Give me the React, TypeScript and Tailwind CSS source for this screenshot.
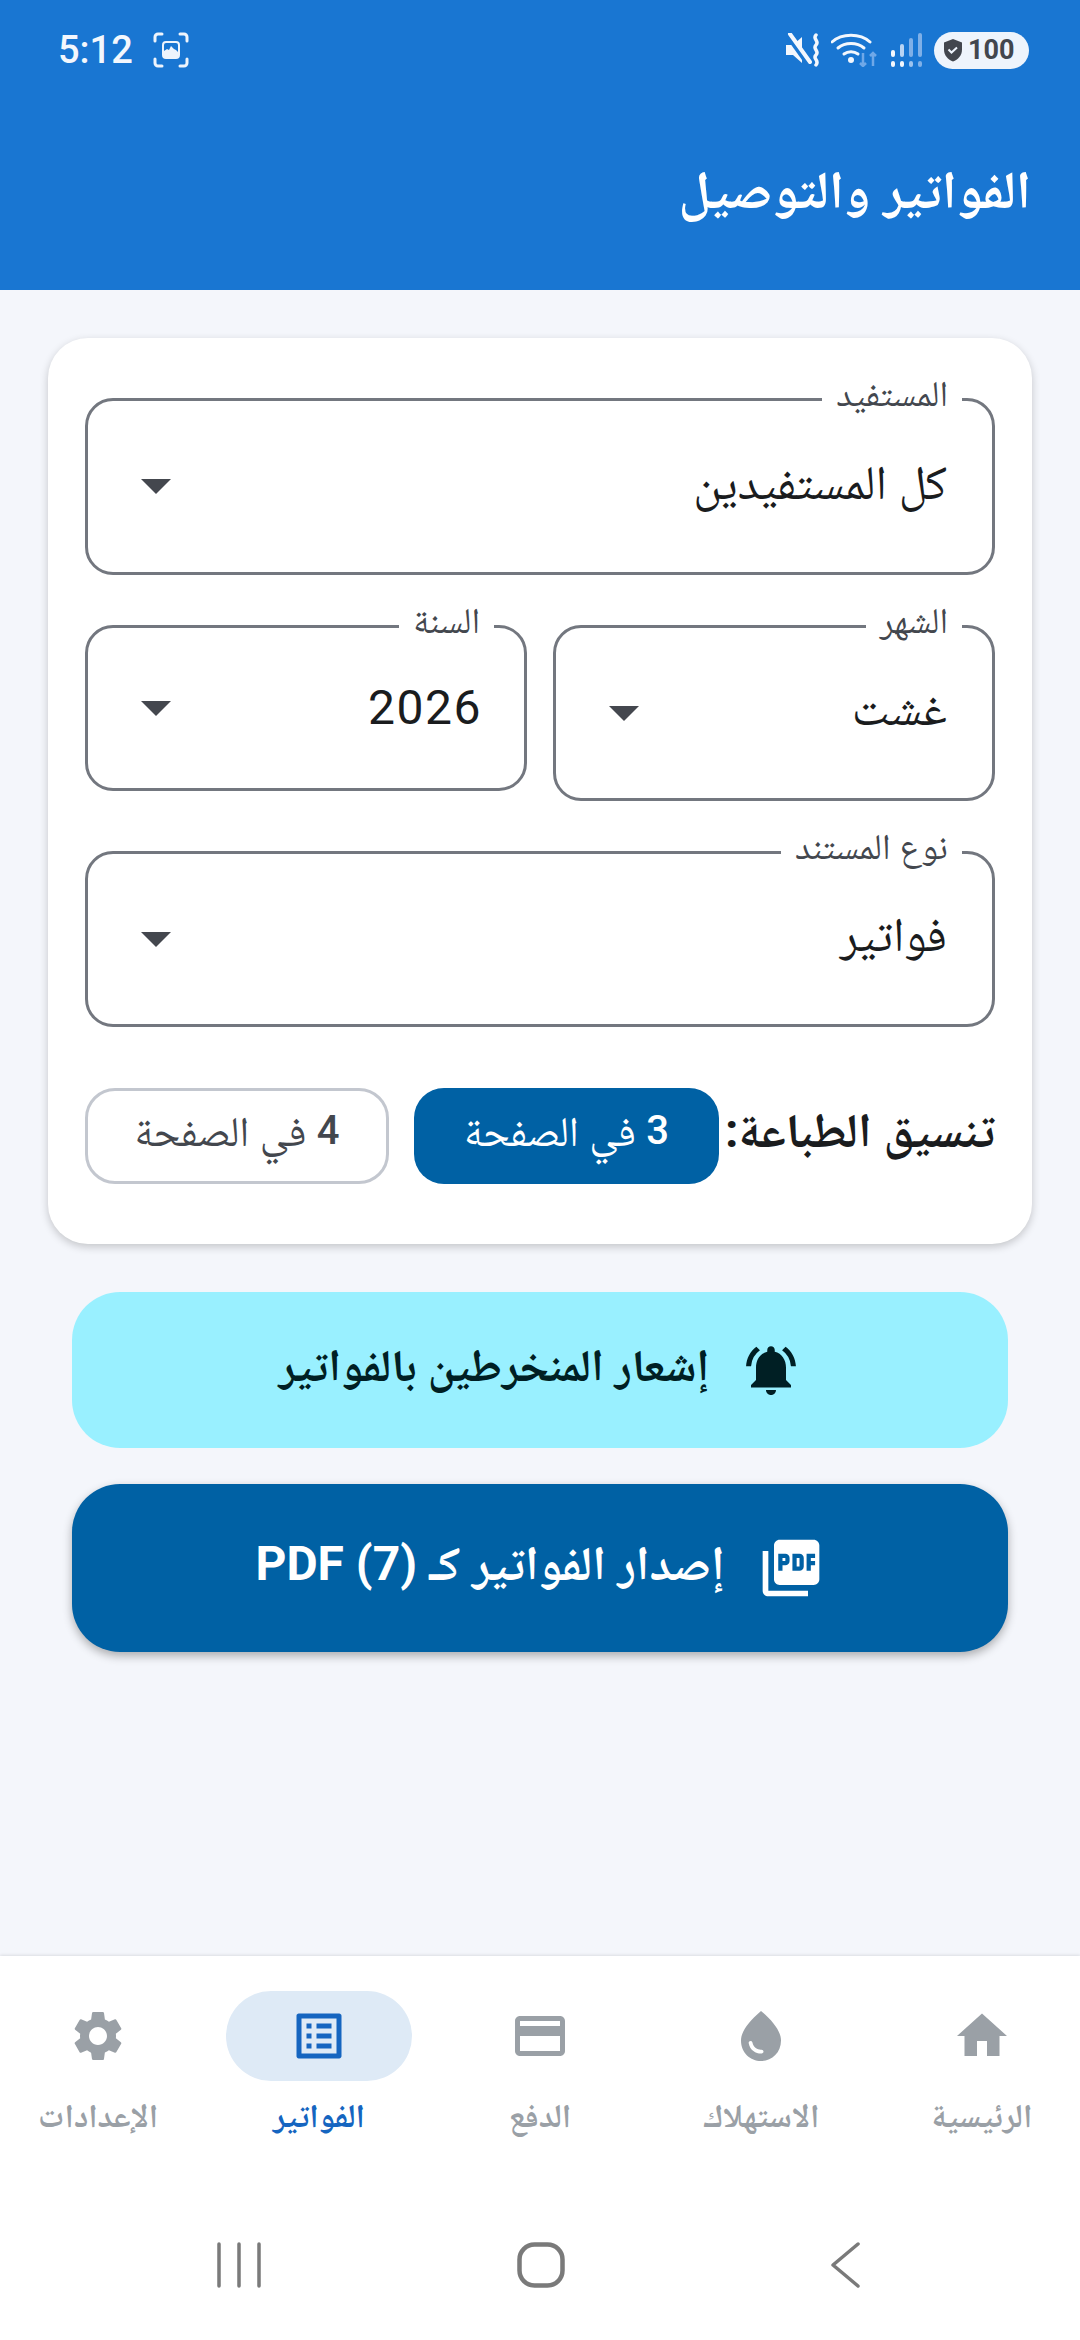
import { MdHome, MdWaterDrop, MdCreditCard, MdListAlt, MdSettings, MdNotificationsActive, MdPictureAsPdf } from "react-icons/md";

const font = { fontFamily: 'Roboto,"Noto Naskh Arabic","DejaVu Sans",sans-serif' };

function Field({ label, value, heightClass, widthClass, valueClass }: { label: string; value: string; heightClass: string; widthClass: string; valueClass: string }) {
  return (
    <div className={`relative ${widthClass} ${heightClass} border-[3px] border-[#73777f] rounded-[28px] pr-[45px] pl-[53px] flex items-center justify-between`}>
      <span className="absolute -top-[27px] right-[30px] bg-white px-[14px] text-[36px] leading-[40px] text-[#43474e]">{label}</span>
      <span className={`${valueClass} text-[48px] leading-[64px] text-[#1a1c1e]`}>{value}</span>
      <svg width="30" height="15" viewBox="0 0 30 15"><path d="M0 0h30L15 15z" fill="#44474e" /></svg>
    </div>
  );
}

const tabs = [
  { label: "الرئيسية", Icon: MdHome },
  { label: "الاستهلاك", Icon: MdWaterDrop },
  { label: "الدفع", Icon: MdCreditCard },
  { label: "الفواتير", Icon: MdListAlt, active: true },
  { label: "الإعدادات", Icon: MdSettings },
];

export default function App() {
  return (
    <div dir="rtl" style={font} className="w-[1080px] h-[2340px] flex flex-col bg-[#f4f6fb] overflow-hidden">
      <header className="h-[290px] bg-[#1976d2] flex flex-col shrink-0">
        <div dir="ltr" className="h-[100px] flex items-center justify-between pl-[58px] pr-[51px]">
          <div className="flex items-center gap-[20px]">
            <span className="text-[38px] leading-[44px] font-medium text-[#f3f7fd]">5:12</span>
            <svg width="36" height="36" viewBox="0 0 36 36" fill="none" stroke="#eef4fc" strokeWidth="3" strokeLinecap="round">
              <path d="M2 9V5a3 3 0 0 1 3-3h4M27 2h4a3 3 0 0 1 3 3v4M34 27v4a3 3 0 0 1-3 3h-4M9 34H5a3 3 0 0 1-3-3v-4" />
              <rect x="10" y="10" width="16" height="16" rx="3" stroke="#eef4fc" strokeWidth="2" fill="#1976d2" />
              <path d="M11 25v-6l3-2 2 1 2-4 3 3 2 1 2 2v5z" fill="#eef4fc" stroke="none" />
            </svg>
          </div>
          <div className="flex items-center gap-[10px]">
            <svg width="36" height="34" viewBox="0 0 36 34" fill="#f3f7fd">
              <path d="M1 12h7l9-8v26l-9-8H1z" />
              <path d="M3 3l20 28" stroke="#1976d2" strokeWidth="5" />
              <path d="M5 1l20 28" stroke="#f3f7fd" strokeWidth="4" strokeLinecap="round" />
              <path d="M31 2c-4 4 4 6 0 10s4 6 0 10 4 5 0 10" fill="none" stroke="#f3f7fd" strokeWidth="3.5" strokeLinecap="round" />
            </svg>
            <svg width="48" height="34" viewBox="0 0 48 34" fill="none">
              <path d="M1 9c10-9 28-9 38 0" stroke="#f3f7fd" strokeWidth="3" strokeLinecap="round" />
              <path d="M7 15c7-6 19-6 26 0" stroke="#f3f7fd" strokeWidth="3" strokeLinecap="round" />
              <path d="M13 21c4-3 10-3 14 0" stroke="#f3f7fd" strokeWidth="3" strokeLinecap="round" />
              <circle cx="20" cy="27" r="3" fill="#f3f7fd" />
              <path d="M32 20v13m-3-3l3 3 3-3M42 33V20m-3 3l3-3 3 3" stroke="#6fa8e8" strokeWidth="2.5" />
            </svg>
            <svg width="31" height="34" viewBox="0 0 31 34" fill="#f3f7fd" className="ml-[2px]">
              <rect x="0" y="28" width="4" height="6" rx="2" />
              <rect x="0" y="17" width="4" height="7" rx="2" />
              <rect x="9" y="28" width="4" height="6" rx="2" />
              <rect x="9" y="11" width="4" height="13" rx="2" fill="#b8d4f4" />
              <rect x="18" y="28" width="4" height="6" rx="2" fill="#9cc3ef" />
              <rect x="18" y="5" width="4" height="19" rx="2" fill="#7fb0e8" />
              <rect x="27" y="28" width="4" height="6" rx="2" fill="#7fb0e8" />
              <rect x="27" y="0" width="4" height="24" rx="2" fill="#7fb0e8" />
            </svg>
            <div className="ml-[2px] w-[95px] h-[37px] rounded-full bg-[#eef4fc] flex items-center pl-[9px] gap-[5px]">
              <svg width="20" height="24" viewBox="0 0 20 24">
                <path d="M10 1l9 3.5v7c0 6-4 10-9 12-5-2-9-6-9-12v-7z" fill="#42464e" />
                <path d="M5.5 11.5l3 3 5.5-5" fill="none" stroke="#eef4fc" strokeWidth="2" />
              </svg>
              <span className="text-[27px] leading-[30px] font-bold text-[#42464e]">100</span>
            </div>
          </div>
        </div>
        <div className="flex-1 flex items-start pr-[49px] pt-[50px]">
          <h1 className="text-[53px] leading-[80px] font-bold text-white">الفواتير والتوصيل</h1>
        </div>
      </header>

      <main className="flex-1 px-[48px] pt-[48px]">
        <section className="bg-white rounded-[40px] shadow-[0_3px_8px_rgba(0,0,0,0.2)] h-[906px] px-[37px] pt-[60px] flex flex-col">
          <Field label="المستفيد" value="كل المستفيدين" widthClass="w-full" heightClass="h-[177px]" valueClass="pb-[8px]" />
          <div className="flex items-start gap-[26px] mt-[50px]">
            <Field label="الشهر" value="غشت" widthClass="flex-1" heightClass="h-[176px]" valueClass="pb-[8px]" />
            <Field label="السنة" value="2026" widthClass="flex-1" heightClass="h-[166px]" valueClass="tracking-[1.5px] -mr-[3px]" />
          </div>
          <div className="mt-[50px]">
            <Field label="نوع المستند" value="فواتير" widthClass="w-full" heightClass="h-[176px]" valueClass="pb-[8px]" />
          </div>
          <div className="flex items-center mt-[61px]">
            <span className="flex-1 pb-[11px] text-[48px] font-bold text-[#1a1c1e] whitespace-nowrap">تنسيق الطباعة:</span>
            <div className="shrink-0 w-[305px] h-[96px] pb-[10px] rounded-[30px] bg-[#0061a4] text-white flex items-center justify-center text-[42px]">
              <b className="font-medium text-[40px]">3</b>&nbsp;في الصفحة
            </div>
            <div className="shrink-0 w-[304px] h-[96px] mr-[25px] pb-[10px] rounded-[30px] border-[3px] border-[#c3c7cf] text-[#43474e] flex items-center justify-center text-[42px]">
              <b className="font-medium text-[40px]">4</b>&nbsp;في الصفحة
            </div>
          </div>
        </section>

        <div className="px-[24px] mt-[48px] flex flex-col gap-[36px]">
          <button className="h-[156px] rounded-[48px] bg-[#99f0ff] text-[#001f24] flex items-center justify-center gap-[32px] text-[45px] font-bold">
            <MdNotificationsActive size={60} />
            <span className="pb-[8px]">إشعار المنخرطين بالفواتير</span>
          </button>
          <button className="h-[168px] rounded-[48px] bg-[#0061a4] text-white flex items-center justify-center gap-[32px] text-[48px] font-bold shadow-[0_4px_10px_rgba(0,0,0,0.3)]">
            <MdPictureAsPdf size={68} />
            <span className="pb-[8px]">إصدار الفواتير كـ PDF (7)</span>
          </button>
        </div>
      </main>

      <nav className="h-[384px] bg-white shadow-[0_-1px_3px_rgba(0,0,0,0.1)] flex flex-col shrink-0 overflow-hidden">
        <div className="flex justify-center pt-[35px]">
          {tabs.map(({ label, Icon, active }) => (
            <div key={label} className="w-[221px] shrink-0 flex flex-col items-center">
              <div className={`w-[186px] h-[90px] rounded-[45px] flex items-center justify-center ${active ? "bg-[#deeaf6]" : ""}`}>
                <Icon size={60} className={active ? "text-[#1565c0]" : "text-[#9aa0a6]"} />
              </div>
              <span className={`mt-[13px] text-[33px] leading-[44px] font-bold ${active ? "text-[#1565c0]" : "text-[#9aa0a6]"}`}>{label}</span>
            </div>
          ))}
        </div>
        <div dir="ltr" className="mt-[104px] flex items-center pl-[215px]">
          <svg width="48" height="46" viewBox="0 0 48 46" stroke="#7a7a7a" strokeWidth="3.5" strokeLinecap="round">
            <path d="M4 2v42M24 2v42M44 2v42" />
          </svg>
          <svg width="48" height="46" viewBox="0 0 48 46" fill="none" stroke="#7a7a7a" strokeWidth="4.5" className="ml-[254px]">
            <rect x="2.5" y="2.5" width="43" height="41" rx="15" />
          </svg>
          <svg width="30" height="46" viewBox="0 0 30 46" fill="none" stroke="#7a7a7a" strokeWidth="3.5" strokeLinecap="round" strokeLinejoin="round" className="ml-[265px]">
            <path d="M28 2L3 23l25 21" />
          </svg>
        </div>
      </nav>
    </div>
  );
}
